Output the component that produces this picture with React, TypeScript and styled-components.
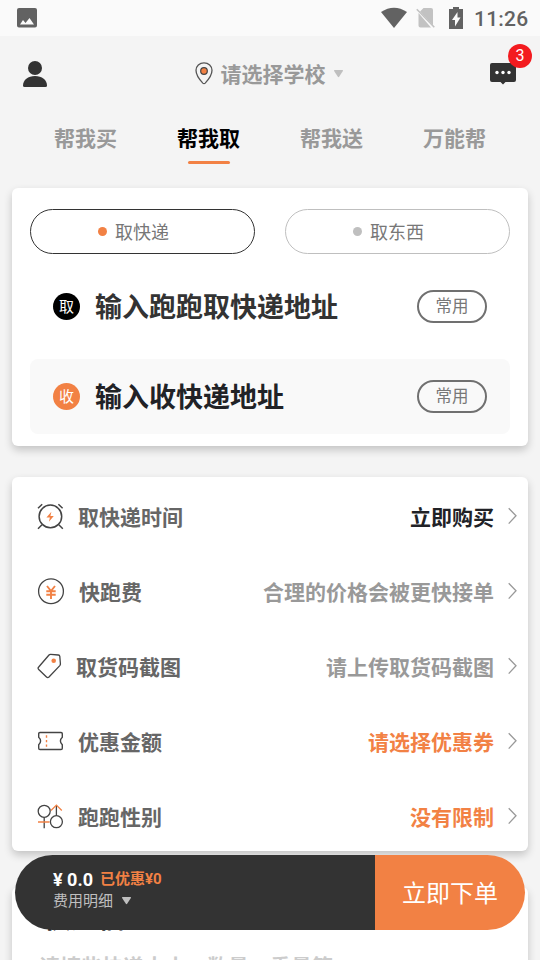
import React from "react";
import styled, { createGlobalStyle } from "styled-components";

const ORANGE = "#f28144";

const GlobalStyle = createGlobalStyle`
  * { box-sizing: border-box; }
  html, body { margin: 0; height: 960px; overflow: hidden; background: #f4f4f4; }
  body { font-family: Roboto, "Noto Sans CJK SC", sans-serif; }
`;

const Screen = styled.main`
  position: relative;
  width: 540px;
  height: 960px;
  overflow: hidden;
  background: #f4f4f4;
`;

const StatusBar = styled.header`
  height: 36px;
  padding: 0 12px 0 16px;
  display: flex;
  align-items: center;
  background: #fafafa;
  color: #626262;
`;

const StatusIcons = styled.div`
  margin-left: auto;
  display: flex;
  align-items: center;
`;

const SimIcon = styled.svg`
  margin: 0 7px 0 9px;
`;

const Clock = styled.span`
  width: 54px;
  margin-left: 5px;
  font-size: 21px;
  line-height: 36px;
  font-weight: 500;
  letter-spacing: 0.2px;
  white-space: nowrap;
  padding-top: 1px;
`;

const TopBar = styled.div`
  height: 74px;
  padding: 2px 23px 0 22px;
  display: grid;
  grid-template-columns: 60px 1fr 60px;
  align-items: center;
`;

const School = styled.div`
  display: flex;
  align-items: center;
  justify-content: center;
  font-size: 21px;
  line-height: 30px;
  font-weight: 700;
  color: #999;
  padding-right: 1px;

  span { margin: 2px 7px 0 8px; }
`;

const Messages = styled.div`
  position: relative;
  justify-self: end;
  width: 28px;
  height: 24px;
`;

const Badge = styled.span`
  position: absolute;
  left: 19px;
  top: -18px;
  width: 24px;
  height: 24px;
  border-radius: 50%;
  background: #f31b1f;
  color: #fff;
  font-size: 16px;
  line-height: 24px;
  text-align: center;
`;

const Tabs = styled.nav`
  height: 78px;
  padding: 13px 24px 0;
  display: grid;
  grid-template-columns: repeat(4, 1fr);
`;

const Tab = styled.div<{ $active?: boolean }>`
  display: flex;
  flex-direction: column;
  align-items: center;
  font-size: 21px;
  line-height: 32px;
  font-weight: 700;
  color: ${(p) => (p.$active ? "#000" : "#999")};

  &::after {
    content: "";
    width: 42px;
    height: 3px;
    margin-top: 6px;
    border-radius: 2px;
    background: ${(p) => (p.$active ? ORANGE : "transparent")};
  }
`;

const Card = styled.section`
  margin: 0 12px;
  border-radius: 6px;
  background: #fff;
  box-shadow: 0 4px 9px rgba(0, 0, 0, 0.2);
`;

const AddressCard = styled(Card)`
  height: 258px;
  padding: 21px 18px 0;
`;

const Choices = styled.div`
  display: grid;
  grid-template-columns: 1fr 1fr;
  gap: 30px;
`;

const Choice = styled.div<{ $on?: boolean }>`
  height: 45px;
  border: 1px solid ${(p) => (p.$on ? "#333" : "#bfbfbf")};
  border-radius: 23px;
  display: flex;
  align-items: center;
  justify-content: center;
  gap: 8px;
  padding: 0 18px 0 0;
  font-size: 18px;
  line-height: 26px;
  color: #777;

  span { padding-top: 2px; }

  &::before {
    content: "";
    width: 9px;
    height: 9px;
    border-radius: 50%;
    background: ${(p) => (p.$on ? ORANGE : "#bfbfbf")};
  }
`;

const Address = styled.div<{ $shaded?: boolean }>`
  height: 75px;
  margin-top: 15px;
  padding: 0 23px;
  border-radius: 8px;
  display: flex;
  align-items: center;
  background: ${(p) => (p.$shaded ? "#f9f9f9" : "transparent")};
  color: ${(p) => (p.$shaded ? "#212226" : "#333")};
`;

const Mark = styled.span<{ $color: string }>`
  width: 27px;
  height: 27px;
  border-radius: 50%;
  background: ${(p) => p.$color};
  color: #fff;
  font-size: 15px;
  line-height: 28px;
  text-align: center;
`;

const AddressText = styled.strong`
  margin-left: 15px;
  padding-top: 2px;
  flex: 1;
  font-size: 27px;
  line-height: 40px;
  font-weight: 700;
`;

const Frequent = styled.span`
  width: 70px;
  height: 33px;
  border: 2px solid #707070;
  border-radius: 17px;
  font-size: 16.5px;
  line-height: 30px;
  text-align: center;
  color: #777;
`;

const OptionsCard = styled(Card)`
  height: 374px;
  margin-top: 31px;
  padding: 2px 11px 0 25px;
`;

const Option = styled.div`
  height: 75px;
  display: flex;
  align-items: center;
  font-size: 21px;
  line-height: 32px;
  font-weight: 700;

  svg { flex: none; }
`;

const Label = styled.span<{ $gap: number }>`
  margin-left: ${(p) => p.$gap}px;
  padding-top: 2px;
  color: #666;
`;

const Value = styled.span<{ $color: string }>`
  margin-left: auto;
  margin-right: 14px;
  padding-top: 2px;
  color: ${(p) => p.$color};
`;

const NoteCard = styled(Card)`
  margin-top: 36px;
  height: 150px;
  padding: 12px 27px;
`;

const NoteTitle = styled.div`
  padding-left: 5px;
  font-size: 27px;
  line-height: 40px;
  font-weight: 700;
  color: #212226;
`;

const NoteHint = styled.div`
  margin-top: 12px;
  font-size: 21px;
  line-height: 32px;
  font-weight: 700;
  color: #ccc;
`;

const OrderBar = styled.footer`
  position: absolute;
  left: 15px;
  right: 15px;
  bottom: 30px;
  height: 75px;
  display: flex;
`;

const Summary = styled.div`
  flex: 1;
  padding: 12px 0 0 38px;
  border-radius: 38px 0 0 38px;
  background: #333;
`;

const PriceLine = styled.div`
  display: flex;
  gap: 7px;
  height: 24px;
  line-height: 25px;
  font-weight: 700;
`;

const Price = styled.span`
  font-size: 18px;
  color: #fff;
`;

const Discount = styled.span`
  font-size: 15px;
  line-height: 25px;
  color: ${ORANGE};
`;

const Details = styled.div`
  display: flex;
  align-items: center;
  gap: 8px;
  font-size: 15px;
  line-height: 20px;
  color: #bfbfbf;
`;

const Submit = styled.div`
  width: 150px;
  border-radius: 0 38px 38px 0;
  background: ${ORANGE};
  color: #fff;
  font-size: 24px;
  line-height: 78px;
  text-align: center;
`;

const Triangle = ({ color }: { color: string }) => (
  <svg width="11" height="10" viewBox="0 0 11 10">
    <path d="M1.6 1h7.8q1 0 .5 1L6.3 7.6q-.8 1.2-1.6 0L1.1 2q-.5-1 .5-1z" fill={color} />
  </svg>
);

const Chevron = () => (
  <svg width="9" height="20" viewBox="0 0 9 20" fill="none" stroke="#999" strokeWidth="1.3">
    <path d="M.7 1.2 8 8.8.7 16.6" />
  </svg>
);

const ClockIcon = () => (
  <svg width="27" height="27" viewBox="0 0 27 27" fill="none" stroke="#444" strokeWidth="1.5">
    <circle cx="13.4" cy="13.4" r="11.3" />
    <path d="M1 5.2 5.2 1.2M21.4 1.2l4.2 4M5 21.7l-4 4M21.8 21.7l4 4" />
    <path d="m14.4 8.7-5 5.7h3.5l-1 4.3 4.9-5.7h-3.4z" fill={ORANGE} stroke="none" />
  </svg>
);

const FeeIcon = () => (
  <svg width="28" height="28" viewBox="0 0 28 28" fill="none" stroke="#444" strokeWidth="1.3">
    <circle cx="14" cy="13.3" r="12.4" />
    <path d="m10 8 4 5 4-5M14 13v8M9.3 13.2h9.4M9.3 16.7h9.4" stroke={ORANGE} strokeWidth="1.9" />
  </svg>
);

const TagIcon = () => (
  <svg width="25" height="28" viewBox="0 0 25 28" fill="none" stroke="#444" strokeWidth="1.3">
    <path d="M13.7 1.3 21.4 2q1.2.1 1.4 1.3l.6 7.5q.1 1-.6 1.8L12 24q-1.3 1.2-2.5 0L1.7 16.5q-1.2-1.2 0-2.5L12 2q.7-.8 1.7-.7z" strokeLinejoin="round" />
    <circle cx="16.7" cy="7.7" r="2.3" fill={ORANGE} stroke="none" />
  </svg>
);

const CouponIcon = () => (
  <svg width="27" height="22" viewBox="0 0 27 22" fill="none" stroke="#444" strokeWidth="1.4">
    <path d="M3 1.5h21q1.3 0 1.3 1.3v3.5q-3.8 3.7 0 7.4v3.5q0 1.3-1.3 1.3H3q-1.3 0-1.3-1.3v-3.5q3.8-3.7 0-7.4V2.8q0-1.3 1.3-1.3z" />
    <path d="M9.5 4.3v11.5" stroke={ORANGE} strokeDasharray="2.4 2.2" />
  </svg>
);

const GenderIcon = () => (
  <svg width="27" height="26" viewBox="0 0 27 26" fill="none" stroke="#444" strokeWidth="1.3">
    <circle cx="7.2" cy="7.3" r="6" />
    <circle cx="19.4" cy="17.7" r="6" />
    <path d="M7.2 13.3v10.9M19.4 11.7V2" />
    <path d="M1 18h11.500M14 6.500l5.400-5.400L24.800 6.500" stroke={ORANGE} />
  </svg>
);

const options = [
  { icon: <ClockIcon />, label: "取快递时间", gap: 14, value: "立即购买", color: "#212226" },
  { icon: <FeeIcon />, label: "快跑费", gap: 14, value: "合理的价格会被更快接单", color: "#999" },
  { icon: <TagIcon />, label: "取货码截图", gap: 14, value: "请上传取货码截图", color: "#999" },
  { icon: <CouponIcon />, label: "优惠金额", gap: 14, value: "请选择优惠券", color: ORANGE },
  { icon: <GenderIcon />, label: "跑跑性别", gap: 14, value: "没有限制", color: ORANGE },
];

export default function App() {
  return (
    <>
      <GlobalStyle />
      <Screen>
        <StatusBar>
          <svg width="22" height="22" viewBox="0 0 22 22">
            <path fill="#626262" fillRule="evenodd" d="M3 1h16a2 2 0 0 1 2 2v15.500a2 2 0 0 1-2 2H3a2 2 0 0 1-2-2V3a2 2 0 0 1 2-2zM4 17.500h14l-4.500-6.500-4 5-2.500-3z" />
          </svg>
          <StatusIcons>
            <svg width="26" height="22" viewBox="0 0 26 22">
              <path d="M0 5Q13-3.500 26 5L13 21z" fill="#626262" />
            </svg>
            <SimIcon width="20" height="22" viewBox="0 0 20 22">
              <path d="M7.500 1H15q2 0 2 2v15.500L4 4.600zM2.500 6v12.500q0 2 2 2H15z" fill="#c2c2c2" />
              <path d="m.8 2.300 17.500 18" stroke="#c2c2c2" strokeWidth="1.600" />
            </SimIcon>
            <svg width="26" height="24" viewBox="0 0 26 24">
              <path fill="#626262" fillRule="evenodd" d="M10 1h6v2h4v20H6V3h4zM14.500 6 9 14h3v6.500l5.500-9h-3z" />
            </svg>
            <Clock>11:26</Clock>
          </StatusIcons>
        </StatusBar>

        <TopBar>
          <svg width="26" height="28" viewBox="0 0 26 28" fill="#333">
            <circle cx="13" cy="8" r="7" />
            <path d="M1 25.500C1 20 6 16 13 16s12 4 12 9.500q0 1.500-1.500 1.500h-21Q1 27 1 25.500z" />
          </svg>
          <School>
            <svg width="18" height="24" viewBox="0 0 18 24" fill="none">
              <path d="M9 .8C4.500.8 1 4.100 1 8.300c0 3.700 2.700 8.500 6.800 12.800q1.200 1.200 2.400 0C14.300 16.800 17 12 17 8.300 17 4.100 13.500.8 9 .8z" stroke="#555" strokeWidth="1.300" />
              <circle cx="9" cy="9" r="3.300" fill={ORANGE} stroke="#444" strokeWidth="1.200" />
            </svg>
            <span>请选择学校</span>
            <Triangle color="#bfbfbf" />
          </School>
          <Messages>
            <svg width="28" height="24" viewBox="0 0 28 24">
              <path d="M3 1h22q2 0 2 2v15q0 2-2 2h-8.500L14 22.500 11.500 20H3q-2 0-2-2V3q0-2 2-2z" fill="#333" />
              <g fill="#fff">
                <circle cx="8" cy="10.500" r="1.700" />
                <circle cx="14" cy="10.500" r="1.700" />
                <circle cx="20" cy="10.500" r="1.700" />
              </g>
            </svg>
            <Badge>3</Badge>
          </Messages>
        </TopBar>

        <Tabs>
          <Tab>帮我买</Tab>
          <Tab $active>帮我取</Tab>
          <Tab>帮我送</Tab>
          <Tab>万能帮</Tab>
        </Tabs>

        <AddressCard>
          <Choices>
            <Choice $on><span>取快递</span></Choice>
            <Choice><span>取东西</span></Choice>
          </Choices>
          <Address>
            <Mark $color="#000">取</Mark>
            <AddressText>输入跑跑取快递地址</AddressText>
            <Frequent>常用</Frequent>
          </Address>
          <Address $shaded>
            <Mark $color={ORANGE}>收</Mark>
            <AddressText>输入收快递地址</AddressText>
            <Frequent>常用</Frequent>
          </Address>
        </AddressCard>

        <OptionsCard>
          {options.map((o) => (
            <Option key={o.label}>
              {o.icon}
              <Label $gap={o.gap}>{o.label}</Label>
              <Value $color={o.color}>{o.value}</Value>
              <Chevron />
            </Option>
          ))}
        </OptionsCard>

        <NoteCard>
          <NoteTitle>快递信息</NoteTitle>
          <NoteHint>请填些快递大小、数量、重量等</NoteHint>
        </NoteCard>

        <OrderBar>
          <Summary>
            <PriceLine>
              <Price>¥ 0.0</Price>
              <Discount>已优惠¥0</Discount>
            </PriceLine>
            <Details>
              费用明细
              <Triangle color="#bfbfbf" />
            </Details>
          </Summary>
          <Submit>立即下单</Submit>
        </OrderBar>
      </Screen>
    </>
  );
}
